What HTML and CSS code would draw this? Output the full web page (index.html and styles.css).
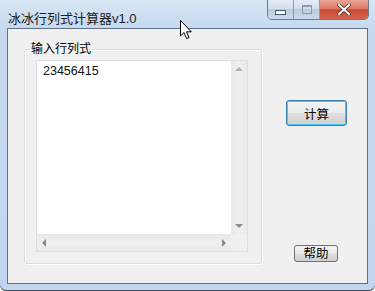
FILE: index.html
```html
<!DOCTYPE html>
<html lang="zh-CN">
<head>
<meta charset="UTF-8">
<title>冰冰行列式计算器v1.0</title>
<link rel="stylesheet" href="styles.css">
</head>
<body>

<div class="window">
  <div class="titlebar">
    <span class="title">冰冰行列式计算器v1.0</span>
    <div class="caption">
      <div class="cap-btn min"><span class="min-bar"></span></div>
      <div class="cap-btn max"><span class="max-box"></span></div>
      <div class="cap-btn close">
        <svg width="14" height="11" viewBox="0 0 14 11">
          <path d="M2 1 L12 10 M12 1 L2 10" stroke="#4a2a24" stroke-width="3.4" stroke-linecap="square"/>
          <path d="M2 1 L12 10 M12 1 L2 10" stroke="#fff" stroke-width="2" stroke-linecap="square"/>
        </svg>
      </div>
    </div>
  </div>

  <div class="client">
    <fieldset class="group">
      <legend>输入行列式</legend>
      <div class="edit">
        <div class="edit-text">23456415</div>
        <div class="vscroll">
          <span class="arr up"></span>
          <span class="arr down"></span>
        </div>
        <div class="hscroll">
          <span class="arr left"></span>
          <span class="arr right"></span>
        </div>
        <div class="corner"></div>
      </div>
    </fieldset>

    <div class="side">
      <button class="btn calc">计算</button>
      <button class="btn help">帮助</button>
    </div>
  </div>
</div>

<svg class="cursor" width="13" height="20" viewBox="0 0 13 20">
  <path d="M0.5 0.5 L0.5 16 L4 12.6 L6.6 18.6 L9 17.6 L6.5 11.8 L11.3 11.8 Z" fill="#fff" stroke="#000" stroke-width="1"/>
</svg>

</body>
</html>
```

FILE: styles.css
```css
html, body {
  margin: 0;
  padding: 0;
}
body {
  width: 375px;
  height: 291px;
  overflow: hidden;
  background: #fff;
  font-family: "Liberation Sans", "Noto Sans CJK SC", sans-serif;
  font-size: 12px;
  color: #000;
  position: relative;
}
.window {
  width: 375px;
  height: 291px;
  box-sizing: border-box;
  padding: 0 7px 7px 7px;
  display: flex;
  flex-direction: column;
  background: linear-gradient(to bottom, #d9e6f4 0px, #c6d9ef 28px, #c1d6ee 100%);
  border-radius: 0 0 6px 6px;
  box-shadow: inset 0 -1px 0 #3a4a5e;
}
.titlebar {
  height: 28px;
  display: flex;
  align-items: flex-start;
  justify-content: space-between;
  flex-shrink: 0;
}
.title {
  margin-top: 8px;
  margin-left: 1px;
  font-size: 13px;
  color: #1b1b1b;
}
.caption {
  display: flex;
  height: 19px;
  margin-right: -1px;
  border: 1px solid #6b7c92;
  border-top: none;
  border-radius: 0 0 5px 5px;
  overflow: hidden;
}
.cap-btn {
  height: 19px;
  display: flex;
  align-items: center;
  justify-content: center;
}
.min, .max {
  width: 25px;
  background: linear-gradient(to bottom, #e4ecf6 0%, #d2deec 45%, #bccbdd 50%, #c9d8ea 100%);
  border-right: 1px solid #8a9ab0;
}
.min-bar {
  width: 9px;
  height: 3px;
  margin-top: 5px;
  background: #fff;
  border: 1px solid #4a5a70;
}
.max-box {
  width: 8px;
  height: 6px;
  border: 1px solid #8a99ad;
  border-top-width: 2px;
  background: transparent;
}
.close {
  width: 48px;
  background: linear-gradient(to bottom, #e9a596 0%, #dc7a66 45%, #c94a33 52%, #d0654c 100%);
}
.client {
  flex: 1;
  background: #f0f0f0;
  border: 1px solid #5f728a;
  display: flex;
  position: relative;
}
.group {
  margin: 12px 0 0 16px;
  padding: 3px 10px 0 11px;
  width: 238px;
  height: 223px;
  box-sizing: border-box;
  border: 1px solid #d5dfe5;
  border-radius: 3px;
  box-shadow: inset 1px 1px 0 #fff, 1px 1px 0 #fff;
}
.group legend {
  padding: 0 3px;
  margin-left: -8px;
  font-size: 12px;
  line-height: 16px;
  color: #000;
}
.edit {
  width: 212px;
  height: 192px;
  box-sizing: border-box;
  border: 1px solid #dcdfe4;
  background: #fff;
  display: grid;
  grid-template-columns: 1fr 16px;
  grid-template-rows: 1fr 17px;
}
.edit-text {
  padding: 3px 0 0 6px;
  font-size: 12.5px;
  line-height: 14px;
  color: #111;
}
.vscroll {
  background: linear-gradient(to right, #e8e8e8, #f0f0f0 50%, #e9e9e9);
  display: flex;
  flex-direction: column;
  justify-content: space-between;
  align-items: center;
  padding: 6px 0;
}
.hscroll {
  background: linear-gradient(to bottom, #e8e8e8, #f0f0f0 50%, #e9e9e9);
  display: flex;
  justify-content: space-between;
  align-items: center;
  padding: 0 5px;
}
.corner {
  background: #f0f0f0;
}
.arr {
  width: 0;
  height: 0;
  border: 4px solid transparent;
}
.arr.up {
  border-top: none;
  border-bottom: 4px solid #b0b0b0;
}
.arr.down {
  border-bottom: none;
  border-top: 4px solid #8a8a8a;
}
.arr.left {
  border-left: none;
  border-right: 4px solid #8a8a8a;
}
.arr.right {
  border-right: none;
  border-left: 4px solid #8a8a8a;
}
.side {
  flex: 1;
  display: flex;
  flex-direction: column;
  align-items: flex-end;
  padding: 71px 20px 0 0;
}
.btn {
  font-family: "Liberation Sans", "Noto Sans CJK SC", sans-serif;
  font-size: 12.5px;
  color: #000;
  padding: 0;
  border-radius: 3px;
  background: linear-gradient(to bottom, #f2f2f2 0%, #ebebeb 48%, #dddddd 52%, #cfcfcf 100%);
  border: 1px solid #707070;
}
.calc {
  width: 61px;
  height: 26px;
  border: 1px solid #3c7fb1;
  box-shadow: inset 0 0 0 1px #48c6ff;
  background: linear-gradient(to bottom, #f4f4f4 0%, #ececec 48%, #dedede 52%, #d2d2d2 100%);
}
.help {
  width: 44px;
  height: 17px;
  margin-top: 119px;
  margin-right: 9px;
  line-height: 14px;
}
.cursor {
  position: absolute;
  left: 180px;
  top: 20px;
}
```
